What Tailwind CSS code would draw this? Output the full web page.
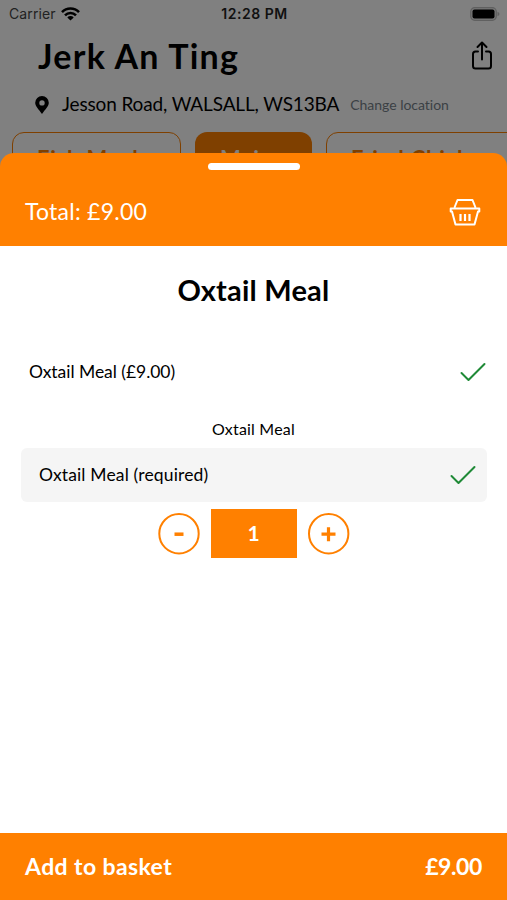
<!DOCTYPE html>
<html lang="en">
<head>
<meta charset="utf-8">
<title>Jerk An Ting</title>
<script src="https://cdn.jsdelivr.net/npm/@tailwindcss/browser@4"></script>
</head>
<body class="bg-white">
<div class="relative h-[900px] w-[507px] overflow-hidden bg-[#808080] font-['Lato','Liberation_Sans',sans-serif] text-black">
  <header>
    <div class="grid h-7 grid-cols-3 items-center pr-[7px] pl-[9px] font-['Inter','Liberation_Sans',sans-serif] text-[14px] leading-7">
      <div class="flex items-center gap-[5px] text-[#222]"><span class="tracking-[0.1px]">Carrier</span>
        <svg class="h-[14px] w-[19px]" viewBox="0 0 19 14" fill="none" stroke="#000" stroke-width="2.6"><path d="M1 5.1a12 12 0 0 1 17 0M4 8.3a7.8 7.8 0 0 1 11 0"/><path d="M9.5 13.6 6.3 10.4a4.6 4.6 0 0 1 6.4 0Z" fill="#000" stroke="none"/></svg>
      </div>
      <span class="justify-self-center font-semibold tracking-[0.5px] text-[#111]">12:28 PM</span>
      <svg class="h-[14px] w-[30px] justify-self-end" viewBox="0 0 30 14"><rect x=".7" y=".7" width="25.6" height="12.6" rx="4" fill="#777" stroke="#606060" stroke-width="1.2"/><rect x="2.5" y="2.5" width="22" height="9" rx="2"/><path d="M27.5 4.700q2 1 2 2.300t-2 2.300Z" fill="#606060"/></svg>
    </div>
    <div class="flex h-[54px] items-center justify-between pr-[14px] pl-[38px]">
      <h1 class="text-[34px] font-bold tracking-[1.25px]">Jerk An Ting</h1>
      <svg class="mt-px h-[30px] w-[22px]" viewBox="0 0 22 30" fill="none" stroke="#000" stroke-width="2" stroke-linecap="round" stroke-linejoin="round"><path d="M7 10.500H4.500Q2 10.500 2 13v12q0 2.500 2.500 2.500h13q2.500 0 2.500-2.500V13q0-2.500-2.500-2.500H15M11 18.500V2M6.500 6 11 1.500 15.500 6"/></svg>
    </div>
    <div class="flex h-[44px] items-center pt-px pl-[35px]">
      <svg class="h-[18px] w-[14px]" viewBox="0 0 14 18"><path fill-rule="evenodd" d="M7 0a6.800 6.800 0 0 0-6.800 6.800C.2 10.500 3.500 13 7 18c3.500-5 6.800-7.500 6.800-11.200A6.800 6.800 0 0 0 7 0Zm0 4.200a2.700 2.700 0 1 1 0 5.400 2.700 2.700 0 0 1 0-5.400Z"/></svg>
      <span class="ml-[13px] text-[19px] tracking-[-0.14px]">Jesson Road, WALSALL, WS13BA</span>
      <span class="ml-[11px] text-[14px] tracking-[-0.03px] text-[#3b4045]">Change location</span>
    </div>
    <nav class="mt-[6px] flex w-[560px] gap-[14px] pl-3 text-[22px] leading-[52px] font-bold tracking-[0.8px] text-[#7f4000]">
      <div class="h-[50px] w-[169px] shrink-0 rounded-xl border border-[#7f4000] pl-6">Fish Meals</div>
      <div class="h-[50px] w-[117px] shrink-0 rounded-xl bg-[#7f4000] pt-px pl-[25px] text-[#808080]">Mains</div>
      <div class="h-[50px] w-[200px] shrink-0 rounded-xl border border-[#7f4000] pl-6">Fried Chicken</div>
    </nav>
  </header>

  <section class="absolute inset-x-0 top-[153px] bottom-0 flex flex-col">
    <div class="h-[93px] rounded-t-[14px] bg-[#ff8000] pt-[10px] text-white">
      <div class="mx-auto h-[7px] w-[92px] rounded-full bg-white"></div>
      <div class="flex h-[83px] items-center justify-between pr-[26px] pl-[25px]">
        <span class="text-[23px] tracking-[0.25px]">Total: £9.00</span>
        <svg class="h-[28px] w-[32px]" viewBox="0 0 32 28" fill="none" stroke="#fff" stroke-width="2" stroke-linejoin="round"><path d="M5.500 9.500 8.500 2h15l3 7.500M1.700 10.500h28.600v3h-1.300L25.500 26.500h-19L3 13.500H1.700Z"/><path d="M11.500 16v7M16 16v7M20.500 16v7" stroke-width="2.200"/></svg>
      </div>
    </div>
    <div class="flex flex-1 flex-col bg-white">
      <h2 class="flex h-[88px] items-center justify-center text-[29px] font-bold tracking-[0.2px]">Oxtail Meal</h2>
      <div class="flex h-[76px] items-center justify-between pr-[21px] pl-[29px] text-[17.500px] tracking-[-0.04px]">Oxtail Meal (£9.00)
        <svg class="h-[20px] w-[26px]" viewBox="0 0 26 20" fill="none" stroke="#1f8a37" stroke-width="2" stroke-linecap="round" stroke-linejoin="round"><path d="M1.500 11 8.500 18 24.500 2"/></svg>
      </div>
      <div class="flex h-[38px] items-center justify-center text-[16px] tracking-[0.2px]">Oxtail Meal</div>
      <div class="mr-5 ml-[21px] flex h-[54px] items-center justify-between rounded-md bg-[#f5f5f5] pr-[11px] pl-[18px] text-[17.500px] tracking-[0.15px]">Oxtail Meal (required)
        <svg class="h-[20px] w-[26px]" viewBox="0 0 26 20" fill="none" stroke="#1f8a37" stroke-width="2" stroke-linecap="round" stroke-linejoin="round"><path d="M1.500 11 8.500 18 24.500 2"/></svg>
      </div>
      <div class="mt-[7px] flex h-[49px] items-center justify-center gap-[11px]">
        <svg class="size-[42px]" viewBox="0 0 42 42" fill="none" stroke="#ff8000"><circle cx="21" cy="20.700" r="19.700" stroke-width="2"/><path d="M16.500 21.200h9" stroke-width="3.500"/></svg>
        <span class="flex h-full w-[86px] items-center justify-center bg-[#ff8000] pb-[2px] text-[21px] font-bold text-white">1</span>
        <svg class="size-[42px]" viewBox="0 0 42 42" fill="none" stroke="#ff8000"><circle cx="20.700" cy="20.700" r="19.700" stroke-width="2"/><path d="M13.500 21.200h14M20.500 14.200v14" stroke-width="3.200"/></svg>
      </div>
      <div class="mt-auto flex h-[67px] items-center justify-between bg-[#ff8000] px-[25px] text-[23px] font-bold text-white"><span class="tracking-[0.4px]">Add to basket</span><span class="tracking-[-0.4px]">£9.00</span></div>
    </div>
  </section>
</div>
</body>
</html>
